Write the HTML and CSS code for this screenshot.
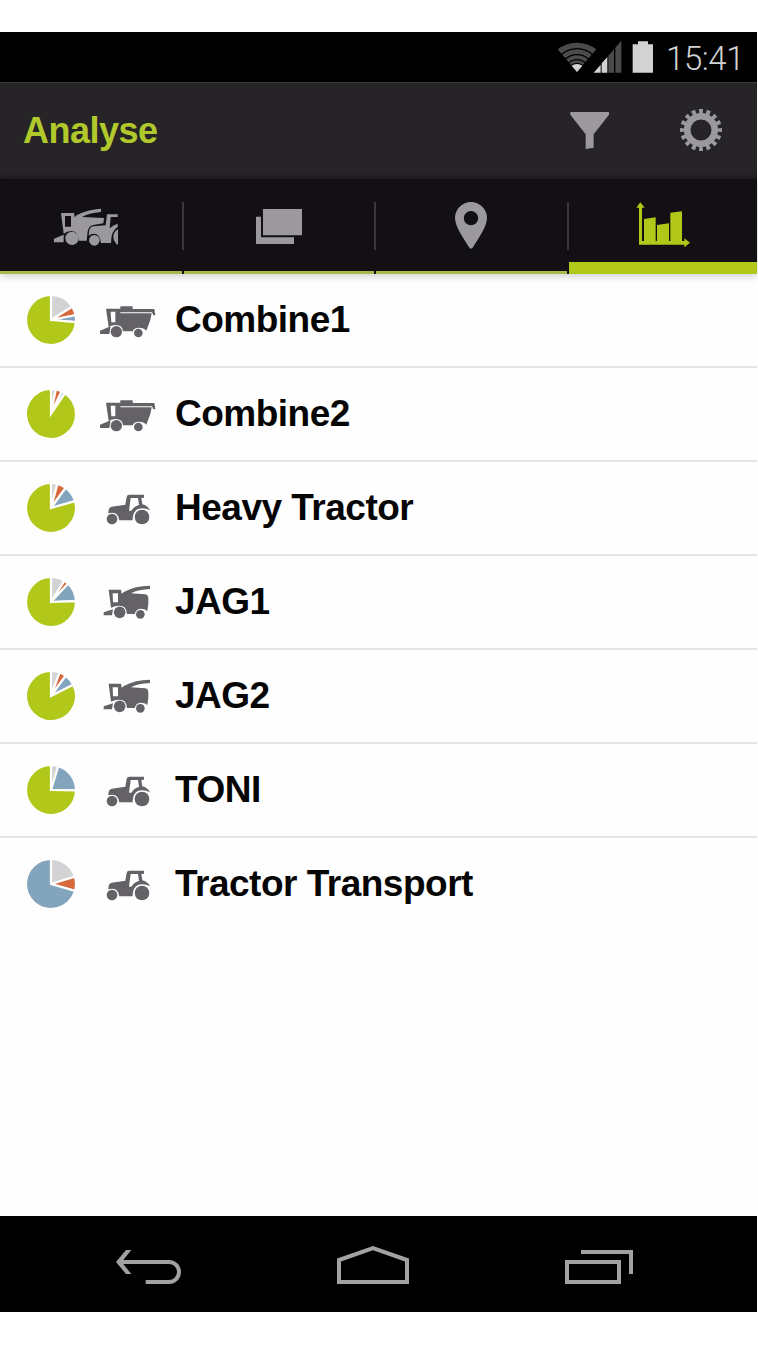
FILE: index.html
```
<!DOCTYPE html>
<html lang="en">
<head>
  <meta charset="UTF-8" />
  <meta name="viewport" content="width=device-width, initial-scale=1.0" />
  <title>Analyse</title>
  <link rel="stylesheet" href="styles.css">
</head>
<body>

  <div class="phone">
    <div class="status-bar">
      <svg class="status-icons" viewBox="50 45 291 102">
        <path class="dim" d="M110 141 L52 73 Q78 53 110 53 Q142 53 168 73 Z" />
        <g class="wifi-gaps">
          <circle cx="110" cy="141" r="70" />
          <circle cx="110" cy="141" r="52" />
          <circle cx="110" cy="141" r="37" />
          <circle cx="110" cy="141" r="26" />
        </g>
        <path class="lit" d="M110 141 L94 122 Q110 112 126 122 Z" />
        <path class="lit" d="M160 143 L181 119 V143 Z M184 115 L201 96 V143 H184 Z" />
        <path class="dim" d="M204 92 L221 73 V143 H204 Z M225 68 L243 47 V143 H225 Z" />
        <path class="lit" d="M277 58 H293 V49 H323 V58 H338 V143 H277 Z" />
      </svg>
      <span class="clock">15:41</span>
    </div>

    <header class="header">
      <h1>Analyse</h1>
      <svg class="filter" viewBox="91 264 117 111">
        <path d="M92 264 H208 V272 L162 331 V371 L138 375 V331 L92 272 Z" />
      </svg>
      <svg class="gear" viewBox="-21 -21 42 42">
        <circle r="13.8" stroke-width="6.6" />
        <circle r="18.6" stroke-width="4.8" pathLength="32" stroke-dasharray="1.05 .95" stroke-dashoffset=".525" />
      </svg>
    </header>

    <nav class="tabs">
      <a class="tab tab-machines">
        <svg width="64" height="48" viewBox="162 366 192 144">
          <path fill-rule="evenodd" d="M183 399 H222 L224 412 L230 406 Q262 388 303 386 V396 Q266 399 246 411 L312 414 L310 430 L280 435 Q266 438 263 454 L260 482 H236 Q236 454 214 453 Q202 453 191 461 Z M195 408 V440 H213 V408 Z" />
          <path d="M162 476 L191 464 V487 H162 Z" />
          <circle cx="216" cy="475" r="20" />
          <path d="M267 457 Q267 442 279 439 L317 436 L321 403 H353 V411 H332 L329 445 Q340 434 353 431 V441 Q333 452 333 489 H303 Q299 461 282 461 Q273 461 266 467 Z" />
          <circle cx="283" cy="481" r="16" />
          <circle cx="366" cy="471" r="26" />
        </svg>
      </a>
      <a class="tab">
        <svg width="46" height="48" viewBox="228 96 138 144">
          <path d="M249 117 H366 V196 H249 Z M228 140 H243 V202 H342 V222 H228 Z" />
        </svg>
      </a>
      <a class="tab tab-map">
        <svg width="34" height="48" viewBox="252 96 102 144">
          <path fill-rule="evenodd" d="M303 96 A48 48 0 0 0 255 144 C255 168 277 200 298 233 Q303 238 308 233 C329 200 351 168 351 144 A48 48 0 0 0 303 96 Z M303 123 A21.500 21.500 0 1 1 302.900 123 Z" />
        </svg>
      </a>
      <a class="tab active">
        <svg width="54" height="48" viewBox="228 96 162 144">
          <path d="M241 97 L254 113 H246 V213 H373 V205 L390 218 L373 232 V224 H237 V113 H229 Z" />
          <path d="M252 147 L287 142 V214 H252 Z M291 165 L327 160 V214 H291 Z M331 128 L366 124 V214 H331 Z" />
        </svg>
      </a>
    </nav>

    <ul class="machine-list" id="machine-list"></ul>

    <div class="nav-bar">
      <svg width="66" height="40" viewBox="78 117 198 120">
        <path d="M167 231 H237 A30 30 0 0 0 237 171 H92" />
        <polygon points="78,171 108,135 124,135 95,171 124,207 108,207" />
      </svg>
      <svg class="home" width="72" height="40" viewBox="741 117 216 120">
        <path d="M747 231 V165 L849 129 L951 165 V231 Z" />
      </svg>
      <svg width="68" height="40" viewBox="75 117 204 120">
        <path d="M81 171 H237 V231 H81 Z M123 141 H273 V207" />
      </svg>
    </div>
  </div>

  <svg class="symbols">
    <symbol id="combine" viewBox="270 66 168 108">
      <path fill-rule="evenodd" d="M288 86 H331 V79 H368 V87 H433 L436 105 L430 106 L426 97 H331 V100 H425 L421 120 L409 152 Q402 143 386 143 Q372 143 368 154 H339 Q337 135 318 135 Q305 135 296 141 Z M302 95 L304 127 H316 V95 Z" />
      <path d="M270 152 L302 139 L298 162 H270 Z" />
      <circle cx="319" cy="155" r="17" />
      <circle cx="385" cy="159" r="13" />
    </symbol>
    <symbol id="tractor" viewBox="270 60 168 108">
      <path d="M295 128 Q295 112 305 110 L346 104 L350 81 Q351 74 358 74 H402 V83 L394 84 L397 103 Q413 107 420 121 Q410 115 396 115 Q368 116 368 151 H328 Q325 128 307 128 Q300 128 295 130 Z" />
      <path class="window" d="M362 84 H384 L387 105 Q372 109 364 122 H357 Z" />
      <circle cx="306" cy="147" r="16" />
      <circle cx="396" cy="141" r="22" />
    </symbol>
    <symbol id="harvester" viewBox="270 54 168 108">
      <path fill-rule="evenodd" d="M296 71 H333 L335 83 L343 77 Q375 59 420 59 V69 Q385 70 363 82 L405 85 Q414 86 415 96 V113 L412 135 Q405 128 391 128 Q378 129 374 144 H351 Q350 119 328 119 Q314 119 303 125 Z M308 82 L309 109 H324 V82 Z" />
      <path d="M281 139 L309 130 L306 148 H281 Z" />
      <circle cx="329" cy="139" r="17.500" />
      <circle cx="391" cy="145" r="13" />
    </symbol>
  </svg>

  <script>
    // slices: [color, end angle], clockwise from the top
    const machines = [
      { name: "Combine1", icon: "combine", slices: [["grey", 58], ["orange", 79], ["blue", 95], ["green", 360]] },
      { name: "Combine2", icon: "combine", slices: [["grey", 11], ["orange", 25], ["grey", 34], ["green", 360]] },
      { name: "Heavy Tractor", icon: "tractor", slices: [["grey", 15], ["orange", 36], ["blue", 74], ["green", 360]] },
      { name: "JAG1", icon: "harvester", slices: [["grey", 32], ["orange", 43], ["blue", 88], ["green", 360]] },
      { name: "JAG2", icon: "harvester", slices: [["grey", 20], ["orange", 36], ["blue", 63], ["green", 360]] },
      { name: "TONI", icon: "tractor", slices: [["grey", 17], ["blue", 91], ["green", 360]] },
      { name: "Tractor Transport", icon: "tractor", slices: [["grey", 73], ["orange", 106], ["blue", 360]] }
    ];

    function point(angle) {
      const a = angle * Math.PI / 180;
      return `${(25 * Math.sin(a)).toFixed(2)} ${(-25 * Math.cos(a)).toFixed(2)}`;
    }

    function pie(slices) {
      let start = 0;
      return slices.map(([color, end]) => {
        const large = end - start > 180 ? 1 : 0;
        const path = `<path class="${color}" d="M0 0 L${point(start)} A25 25 0 ${large} 1 ${point(end)} Z" />`;
        start = end;
        return path;
      }).join("");
    }

    document.getElementById("machine-list").innerHTML = machines.map(m => `
      <li>
        <svg class="pie" viewBox="-25 -25 50 50">${pie(m.slices)}</svg>
        <svg class="machine"><use href="#${m.icon}" /></svg>
        <span>${m.name}</span>
      </li>`).join("");
  </script>
</body>
</html>
```
FILE: styles.css
```
* {
  box-sizing: border-box;
}

body {
  margin: 0;
  padding: 32px 0 36px;
  background: #fff;
  font-family: "Liberation Sans", Arial, sans-serif;
}

svg {
  display: block;
  flex: none;
}

.phone {
  display: flex;
  flex-direction: column;
  width: 757px;
  height: 1280px;
  background: #fefefe;
}

.status-bar {
  display: flex;
  justify-content: flex-end;
  align-items: center;
  height: 50px;
  padding-right: 13px;
  background: #000;
}

.status-icons {
  width: 97px;
  height: 34px;
}

.status-icons .dim {
  fill: #4b4b4b;
}

.status-icons .lit {
  fill: #d2d2d2;
}

.wifi-gaps {
  fill: none;
  stroke: #000;
  stroke-width: 4;
}

.clock {
  width: 78px;
  margin-left: 12px;
  padding-top: 3px;
  font-family: Roboto, sans-serif;
  font-size: 33px;
  font-weight: 300;
  line-height: 47px;
  letter-spacing: -0.4px;
  color: #d2d2d4;
  white-space: nowrap;
}

.header {
  display: flex;
  align-items: center;
  height: 97px;
  padding: 0 35px 2px 23px;
  background: linear-gradient(#262427 92%, #1f1d20);
  border-top: 1px solid #3d3b3e;
}

.header h1 {
  flex: 1;
  margin: 0;
  padding-top: 1px;
  font-size: 36px;
  letter-spacing: -0.5px;
  color: #b1c92b;
}

.filter {
  width: 39px;
  height: 37px;
  fill: #9b999c;
}

.gear {
  width: 42px;
  height: 42px;
  margin-left: 71px;
  fill: none;
  stroke: #9b999c;
}

.tabs {
  position: relative;
  z-index: 1;
  display: grid;
  grid-template-columns: 184px 192px 193px 1fr;
  height: 95px;
  background: #121013;
  box-shadow: 0 2px 8px rgba(0, 0, 0, 0.2);
}

.tab {
  display: flex;
  justify-content: center;
  padding-top: 23px;
  padding-right: 2px;
  background:
    linear-gradient(#39373a, #39373a) right 23px / 2px 48px no-repeat,
    linear-gradient(#121013, #121013) right bottom / 2px 3px no-repeat,
    linear-gradient(#a9b94c, #a9b94c) bottom / 100% 3px no-repeat;
  fill: #9b999c;
}

.tab-machines {
  padding-right: 12px;
}

.tab-map {
  padding-right: 3px;
}

.tab.active {
  padding-right: 0;
  background: none;
  border-bottom: 12px solid #b1c81a;
  fill: #b1c81a;
}

.machine-list {
  flex: 1;
  margin: 0;
  padding: 0;
  list-style: none;
}

.machine-list li {
  display: flex;
  align-items: center;
  height: 94px;
  padding-left: 26px;
  border-bottom: 2px solid #e5e5e5;
  font-size: 37px;
  font-weight: bold;
  letter-spacing: -0.5px;
  color: #050505;
}

.machine-list li:last-child {
  border-bottom-color: transparent;
}

.pie {
  width: 50px;
  height: 50px;
  stroke: #fefefe;
  stroke-width: 2.2;
}

.pie .grey {
  fill: #d3d2d4;
}

.pie .orange {
  fill: #d8693c;
}

.pie .blue {
  fill: #82a4bd;
}

.pie .green {
  fill: #b1c81a;
}

.machine {
  width: 56px;
  height: 36px;
  margin: 0 19px 0 24px;
  fill: #646266;
}

.window {
  fill: #fefefe;
}

.symbols {
  position: absolute;
  width: 0;
  height: 0;
}

.nav-bar {
  display: flex;
  justify-content: space-between;
  align-items: center;
  height: 96px;
  padding: 0 124px 0 116px;
  background: #000;
}

.nav-bar .home {
  margin-right: 1px;
}

.nav-bar path {
  fill: none;
  stroke: #a3a1a4;
  stroke-width: 12;
}

.nav-bar polygon {
  fill: #a3a1a4;
}
```
